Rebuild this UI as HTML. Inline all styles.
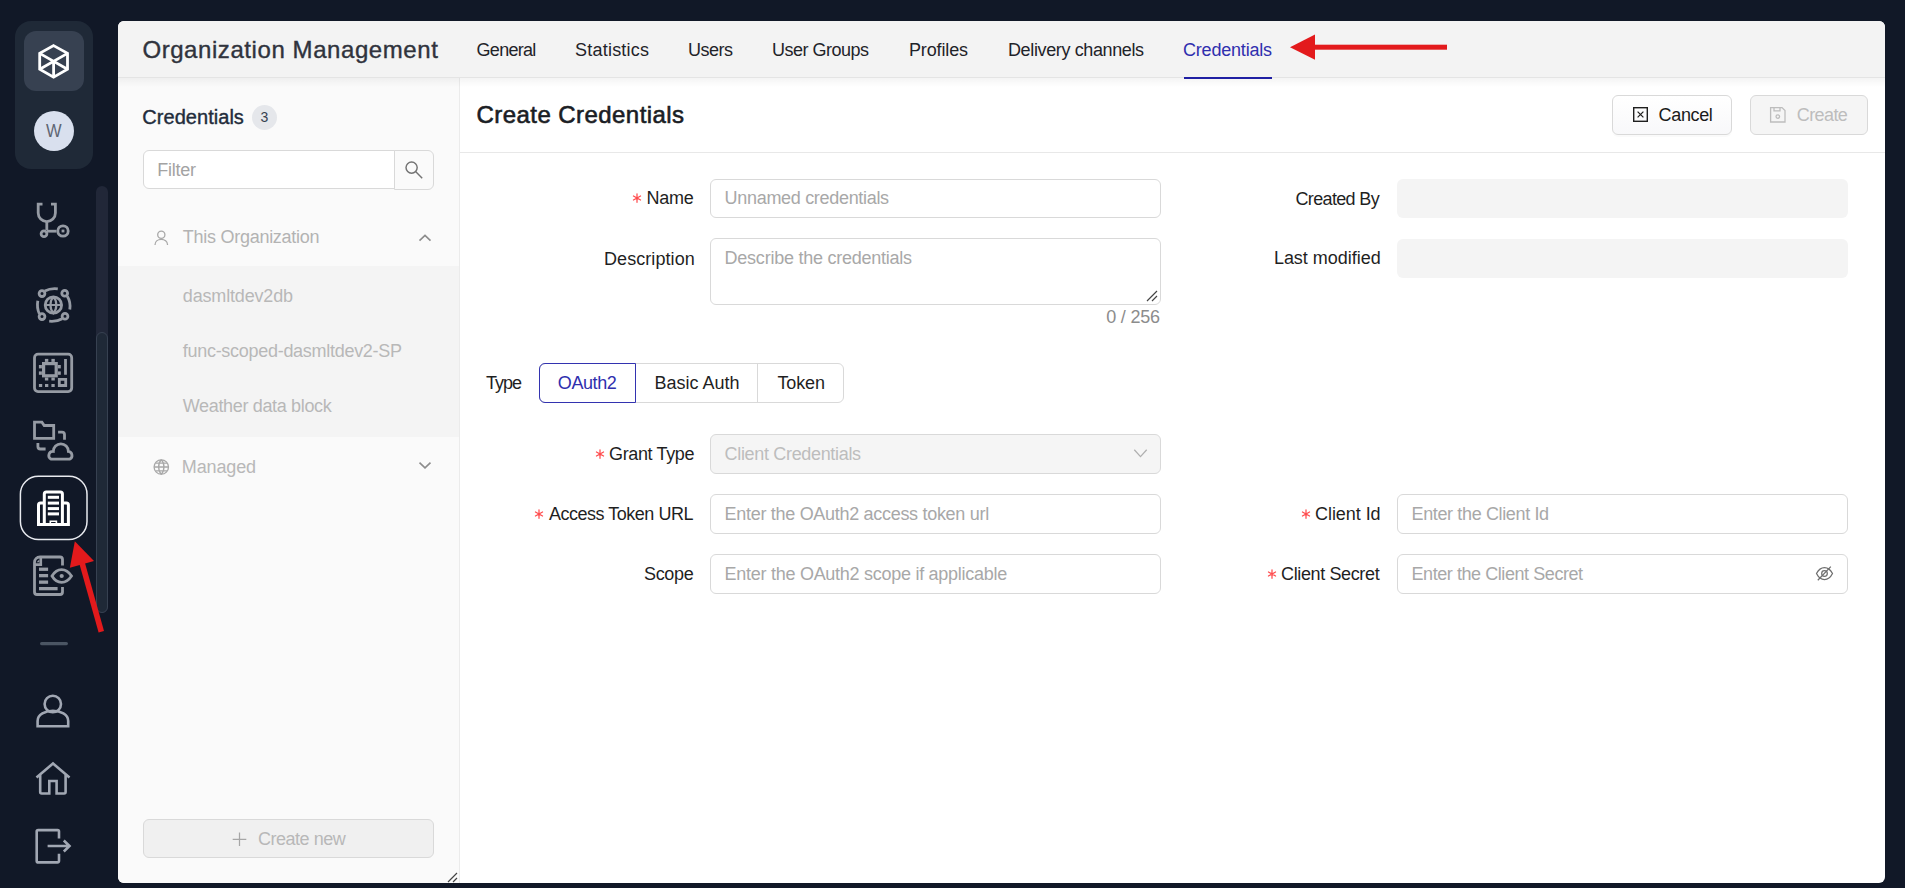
<!DOCTYPE html>
<html><head><meta charset="utf-8">
<style>
html,body{margin:0;padding:0;}
body{width:1905px;height:888px;overflow:hidden;position:relative;background:#111827;font-family:"Liberation Sans",sans-serif;}
.abs{position:absolute;}
.t{position:absolute;white-space:nowrap;line-height:1;}
.box{position:absolute;box-sizing:border-box;}
.inp{position:absolute;box-sizing:border-box;border:1px solid #d9d9d9;border-radius:6px;background:#fff;}
</style></head><body>

<svg class="abs" style="left:0;top:0" width="118" height="888" viewBox="0 0 118 888">
  <rect x="15" y="21" width="78" height="148" rx="16" fill="#1f2937"/>
  <rect x="24" y="31" width="60" height="60" rx="12" fill="#374151"/>
  <g fill="none" stroke="#ffffff" stroke-width="2.8" stroke-linejoin="miter">
    <path d="M53.6 45.6 L67.5 53.4 L67.5 69.3 L53.6 77.2 L39.7 69.3 L39.7 53.4 Z"/>
    <path d="M39.7 53.4 L67.5 69.3 M67.5 53.4 L39.7 69.3 M53.6 61.3 L53.6 77.2"/>
  </g>
  <circle cx="54" cy="131" r="20" fill="#d9e0ee"/>
  <text x="46" y="136.8" font-family="Liberation Sans" font-size="17.7" textLength="15.6" lengthAdjust="spacingAndGlyphs" fill="#5f6673">W</text>
  <rect x="96" y="186" width="12" height="427" rx="6" fill="#212738"/>
  <rect x="96.5" y="332.5" width="11" height="280" rx="5.5" fill="#1f2937" stroke="#374151" stroke-width="1"/>
  <g fill="none" stroke="#969ba4" stroke-width="2.8">
    <!-- stethoscope -->
    <path d="M42.5 204.2 H38.2 V213 A8.6 8.6 0 0 0 55.4 213 V204.2 H51" stroke-linecap="butt"/>
    <path d="M46.8 221.6 V230"/>
    <circle cx="44" cy="233.8" r="2.9"/>
    <path d="M47 231.2 H56.5"/>
    <circle cx="63" cy="231" r="5.2"/>
    <!-- globe orbit -->
    <circle cx="53.4" cy="305" r="8.2"/>
    <path d="M45.2 305 H61.6 M53.4 296.8 C49.5 301 49.5 309 53.4 313.2 C57.3 309 57.3 301 53.4 296.8" stroke-width="2.2"/>
    <circle cx="42" cy="293.6" r="2.9"/>
    <circle cx="64.7" cy="293.3" r="2.9"/>
    <circle cx="42" cy="316.6" r="2.9"/>
    <circle cx="65" cy="316.2" r="2.9"/>
    <path d="M44.8 291 C48.5 289 53 288.2 57.8 288.8"/>
    <path d="M67.3 296.3 C69.5 300 70.5 305 69.8 309.5"/>
    <path d="M62.2 318.8 C58.5 321 54 321.6 49.2 321.2"/>
    <path d="M39.4 314 C37.5 310 37 305.5 37.8 300.8"/>
    <!-- board -->
    <rect x="34.5" y="354.2" width="37.2" height="37.4" rx="3.5"/>
    <rect x="43.6" y="363.6" width="12.6" height="12.2" stroke-width="3.2"/>
    <path d="M65.5 358.9 V374.8 M59.3 379.3 H65.7 V385.5 H59.3 Z" />
  </g>
  <g fill="#969ba4">
    <rect x="61.6" y="229.6" width="2.8" height="2.8"/>
    <rect x="44.9" y="358.9" width="3.4" height="3"/><rect x="51.4" y="358.9" width="3.4" height="3"/>
    <rect x="44.9" y="377.5" width="3.4" height="3"/><rect x="51.4" y="377.5" width="3.4" height="3"/>
    <rect x="38.9" y="365" width="3" height="3.4"/><rect x="38.9" y="371.4" width="3" height="3.4"/>
    <rect x="57.8" y="365" width="3" height="3.4"/><rect x="57.8" y="371.4" width="3" height="3.4"/>
    <rect x="38.9" y="384" width="3.3" height="3"/><rect x="45" y="384" width="3.3" height="3"/><rect x="51.4" y="384" width="3.3" height="3"/>
  </g>
  <g fill="none" stroke="#969ba4" stroke-width="2.8">
    <!-- folder cloud -->
    <path d="M34.5 422.2 H41.9 L44.2 425.5 H53.7 V438.3 H34.5 Z"/>
    <path d="M58.1 432.2 H62 A2.5 2.5 0 0 1 64.5 434.7 V439.8"/>
    <path d="M37.9 443 V446.5 A2.5 2.5 0 0 0 40.4 449 H45.6"/>
    <path d="M51.2 459.2 H69.6 A4.1 4.1 0 0 0 68.4 451.4 A7.5 7.5 0 0 0 53.3 451.4 A4.1 4.1 0 0 0 51.2 459.2 Z"/>
    <!-- doc eye -->
    <path d="M62.5 565.5 V559.5 A2.5 2.5 0 0 0 60 557 H40 C37 557 34.5 559 34.5 562.5 V592 A2.5 2.5 0 0 0 37 594.5 H60 A2.5 2.5 0 0 0 62.5 592 V587"/>
    <path d="M34.5 564.6 H40.8 V557.2" stroke-width="2.6"/>
    <path d="M52 576 C57 567.5 66 567.5 71.5 576 C66 584.5 57 584.5 52 576 Z"/>
  </g>
  <g fill="#969ba4">
    <path d="M36.6 562.2 L39.3 562.2 L39.3 559.4 Z"/>
    <rect x="39" y="567.6" width="9.1" height="3.3"/>
    <rect x="39" y="574" width="9.1" height="3.3"/>
    <rect x="39" y="580.5" width="9.1" height="3.3"/>
    <rect x="39" y="587" width="18.6" height="3.3"/>
    <circle cx="61.7" cy="576" r="2.1"/>
  </g>
  <!-- active building -->
  <rect x="20.4" y="476.2" width="66.6" height="63.4" rx="18" fill="none" stroke="#e8eaef" stroke-width="1.5"/>
  <g fill="none" stroke="#ffffff" stroke-width="3">
    <path d="M44.3 524.5 V494 A2 2 0 0 1 46.3 492 H60.4 A2 2 0 0 1 62.4 494 V524.5"/>
    <path d="M44.3 503 H40.5 A2 2 0 0 0 38.5 505 V524.5 H68.4 V505 A2 2 0 0 0 66.4 503 H62.4"/>
    <path d="M50.3 524.5 V521.2 H56.4 V524.5" stroke-width="1.6"/>
  </g>
  <g fill="#ffffff">
    <rect x="47.8" y="495.8" width="11.2" height="3"/>
    <rect x="47.8" y="501.6" width="11.2" height="3"/>
    <rect x="47.8" y="507.1" width="11.2" height="3"/>
    <rect x="47.8" y="512.4" width="11.2" height="3"/>
  </g>
  <rect x="40" y="642" width="28" height="3.2" rx="1.6" fill="#4b5563"/>
  <g fill="none" stroke="#a1a7b3" stroke-width="2.6">
    <circle cx="52.8" cy="704" r="8.2"/>
    <path d="M37.6 726.2 V721 C37.6 707.5 68.2 707.5 68.2 721 V726.2 Z"/>
    <path d="M36.5 777.5 L53 763.5 L69.5 777.5 M40.2 775 V792 A1.5 1.5 0 0 0 41.7 793.5 H49.3 V781 H56.6 V793.5 H64.1 A1.5 1.5 0 0 0 65.6 792 V775"/>
    <path d="M59 838.5 V831.6 A1.5 1.5 0 0 0 57.5 830.1 H38.2 A1.5 1.5 0 0 0 36.7 831.6 V860.9 A1.5 1.5 0 0 0 38.2 862.4 H57.5 A1.5 1.5 0 0 0 59 860.9 V853.7"/>
    <path d="M47.6 846 H69.5 M63.8 840.5 L69.5 846 L63.8 851.5"/>
  </g>
</svg>
<div class="abs" style="left:118px;top:21px;width:1767px;height:862px;border-radius:6px;overflow:hidden;background:#fff;">
  <div class="abs" style="left:0;top:0;width:1767px;height:56px;background:#f3f3f3;border-bottom:1px solid #e4e4e4;"></div>
  <div class="abs" style="left:0;top:57px;width:341px;height:805px;background:#fafafa;border-right:1px solid #ebebeb;"></div>
  <div class="abs" style="left:0;top:57px;width:1767px;height:9px;background:linear-gradient(rgba(0,0,0,0.045),rgba(0,0,0,0));"></div>
  <div class="abs" style="left:0;top:245px;width:341px;height:171px;background:#f4f4f4;"></div>
  <div class="abs" style="left:342px;top:131px;width:1425px;height:1px;background:#e8e8e8;"></div>
  <div class="abs" style="left:1066px;top:56px;width:88px;height:2px;background:#1f1fa3;"></div>
</div>
<!-- left panel widgets -->
<div class="box" style="left:252px;top:105px;width:25px;height:25px;border-radius:50%;background:#e5e7eb;"></div>
<div class="inp" style="left:143px;top:150px;width:252px;height:39px;border-radius:6px 0 0 6px;"></div>
<div class="box" style="left:394px;top:150px;width:40px;height:40px;border:1px solid #d9d9d9;border-radius:0 6px 6px 0;background:#fafafa;"></div>
<svg class="abs" style="left:380px;top:140px" width="60" height="60"><g fill="none" stroke="#737373" stroke-width="1.45"><circle cx="31.6" cy="27.6" r="5.6"/><path d="M35.6 31.6 L42.2 38.2"/></g></svg>
<svg class="abs" style="left:140px;top:220px" width="300" height="270"><g fill="none" stroke="#a8a8a8" stroke-width="1.3">
  <circle cx="21.3" cy="14.8" r="3.6"/><path d="M15 25 C15 17.5 27.6 17.5 27.6 25"/>

  <circle cx="21.3" cy="247" r="7.2"/><path d="M14.1 247 H28.5 M21.3 239.8 C17.8 243 17.8 251 21.3 254.2 C24.8 251 24.8 243 21.3 239.8 M15.5 243.2 H27.1 M15.5 250.8 H27.1"/>
</g><g fill="none" stroke="#8c8c8c" stroke-width="1.6">
  <path d="M279.5 20.6 L285 15.4 L290.5 20.6"/>
  <path d="M279.5 242.6 L285 247.8 L290.5 242.6"/>
</g></svg>
<div class="box" style="left:143px;top:819px;width:291px;height:39px;border:1px solid #d9d9d9;border-radius:6px;background:#f0f0f0;"></div>
<svg class="abs" style="left:228px;top:828px" width="24" height="24"><path d="M11.5 4.5 V18 M4.7 11.3 H18.3" stroke="#a6a6a6" stroke-width="1.25" fill="none"/></svg>
<svg class="abs" style="left:440px;top:865px" width="20" height="20"><path d="M8 17 L17 8 M13 17 L17 13" stroke="#444" stroke-width="1.2" fill="none"/></svg>
<!-- main buttons -->
<div class="box" style="left:1612px;top:95px;width:120px;height:40px;border:1px solid #d9d9d9;border-radius:6px;background:linear-gradient(#ffffff,#f8f8fa);box-shadow:0 2px 0 rgba(0,0,0,0.02);"></div>
<svg class="abs" style="left:1630px;top:104px" width="22" height="22"><rect x="3.7" y="3.7" width="13.6" height="13.6" fill="none" stroke="#1f1f1f" stroke-width="1.4"/><path d="M7.6 7.6 L13.4 13.4 M13.4 7.6 L7.6 13.4" stroke="#1f1f1f" stroke-width="1.2"/></svg>
<div class="box" style="left:1750px;top:95px;width:118px;height:40px;border:1px solid #d9d9d9;border-radius:6px;background:#f5f5f5;"></div>
<svg class="abs" style="left:1767px;top:104px" width="22" height="22"><g fill="none" stroke="#bdbdbd" stroke-width="1.3"><path d="M3.6 3.6 H15 L18 6.6 V18 H3.6 Z"/><path d="M7 3.6 V6.8 H13 V3.6"/><circle cx="10.8" cy="12.6" r="1.8"/></g></svg>
<!-- form -->
<div class="inp" style="left:710px;top:179px;width:451px;height:39px;"></div>
<div class="inp" style="left:710px;top:238px;width:451px;height:67px;"></div>
<svg class="abs" style="left:1144px;top:288px" width="16" height="16"><path d="M3 13 L13 3 M8 13 L13 8" stroke="#444" stroke-width="1.2" fill="none"/></svg>
<div class="box" style="left:1397px;top:179px;width:451px;height:39px;border-radius:6px;background:#f4f4f4;"></div>
<div class="box" style="left:1397px;top:239px;width:451px;height:39px;border-radius:6px;background:#f4f4f4;"></div>
<div class="box" style="left:539px;top:363px;width:305px;height:40px;border:1px solid #d9d9d9;border-radius:6px;background:#fff;"></div>
<div class="box" style="left:757px;top:363px;width:1px;height:40px;background:#d9d9d9;"></div>
<div class="box" style="left:539px;top:363px;width:97px;height:40px;border:1px solid #3333b0;border-radius:6px 0 0 6px;"></div>
<div class="inp" style="left:710px;top:434px;width:451px;height:40px;background:#f5f5f5;"></div>
<svg class="abs" style="left:1130px;top:444px" width="20" height="20"><path d="M4.3 5.8 L10.5 12.6 L16.7 5.8" stroke="#b0b0b0" stroke-width="1.3" fill="none"/></svg>
<div class="inp" style="left:710px;top:494px;width:451px;height:40px;"></div>
<div class="inp" style="left:710px;top:554px;width:451px;height:40px;"></div>
<div class="inp" style="left:1397px;top:494px;width:451px;height:40px;"></div>
<div class="inp" style="left:1397px;top:554px;width:451px;height:40px;"></div>
<svg class="abs" style="left:1810px;top:560px" width="30" height="28"><g fill="none" stroke="#6e6e6e" stroke-width="1.25"><path d="M6.5 13.5 C10.5 5.5 18.5 5.5 22.5 13.5 C18.5 21.5 10.5 21.5 6.5 13.5 Z"/><circle cx="14.5" cy="13.5" r="2.8"/><path d="M7.8 20.2 L20.8 6.6"/></g></svg>
<!-- asterisks -->
<svg class="abs" style="left:631.3px;top:192.4px" width="12" height="12"><path d="M6 1.75 V10.25 M2.45 3.95 L9.55 8.05 M9.55 3.95 L2.45 8.05" stroke="#ff4d4f" stroke-width="1.25" stroke-linecap="round"/></svg>
<svg class="abs" style="left:594.2px;top:447.9px" width="12" height="12"><path d="M6 1.75 V10.25 M2.45 3.95 L9.55 8.05 M9.55 3.95 L2.45 8.05" stroke="#ff4d4f" stroke-width="1.25" stroke-linecap="round"/></svg>
<svg class="abs" style="left:533.4px;top:508px" width="12" height="12"><path d="M6 1.75 V10.25 M2.45 3.95 L9.55 8.05 M9.55 3.95 L2.45 8.05" stroke="#ff4d4f" stroke-width="1.25" stroke-linecap="round"/></svg>
<svg class="abs" style="left:1300.3px;top:508px" width="12" height="12"><path d="M6 1.75 V10.25 M2.45 3.95 L9.55 8.05 M9.55 3.95 L2.45 8.05" stroke="#ff4d4f" stroke-width="1.25" stroke-linecap="round"/></svg>
<svg class="abs" style="left:1265.9px;top:568px" width="12" height="12"><path d="M6 1.75 V10.25 M2.45 3.95 L9.55 8.05 M9.55 3.95 L2.45 8.05" stroke="#ff4d4f" stroke-width="1.25" stroke-linecap="round"/></svg>
<div class="t" id="t0" style="left:142.40px;top:37.68px;font-size:24px;color:#30333d;letter-spacing:0.573px;-webkit-text-stroke:0.38px #30333d;">Organization Management</div>
<div class="t" id="t1" style="left:476.60px;top:40.56px;font-size:18px;color:#1f2329;letter-spacing:-0.733px;">General</div>
<div class="t" id="t2" style="left:575.00px;top:40.56px;font-size:18px;color:#1f2329;letter-spacing:0.222px;">Statistics</div>
<div class="t" id="t3" style="left:688.00px;top:40.56px;font-size:18px;color:#1f2329;letter-spacing:-0.500px;">Users</div>
<div class="t" id="t4" style="left:772.00px;top:40.56px;font-size:18px;color:#1f2329;letter-spacing:-0.500px;">User Groups</div>
<div class="t" id="t5" style="left:909.00px;top:40.56px;font-size:18px;color:#1f2329;letter-spacing:-0.143px;">Profiles</div>
<div class="t" id="t6" style="left:1008.00px;top:40.56px;font-size:18px;color:#1f2329;letter-spacing:-0.375px;">Delivery channels</div>
<div class="t" id="t7" style="left:1183.00px;top:40.56px;font-size:18px;color:#2f2fae;letter-spacing:-0.200px;">Credentials</div>
<div class="t" id="t8" style="left:142.30px;top:107.07px;font-size:20px;color:#222c3b;letter-spacing:0.040px;-webkit-text-stroke:0.38px #222c3b;">Credentials</div>
<div class="t" id="t9" style="left:260.50px;top:110.15px;font-size:14px;color:#374151;letter-spacing:0.000px;">3</div>
<div class="t" id="t10" style="left:157.20px;top:160.76px;font-size:18px;color:#a3a3a3;letter-spacing:-0.240px;">Filter</div>
<div class="t" id="t11" style="left:182.80px;top:228.46px;font-size:18px;color:#b3b3b3;letter-spacing:-0.269px;">This Organization</div>
<div class="t" id="t12" style="left:182.80px;top:287.46px;font-size:18px;color:#b8b8b8;letter-spacing:-0.164px;">dasmltdev2db</div>
<div class="t" id="t13" style="left:182.80px;top:342.46px;font-size:18px;color:#b8b8b8;letter-spacing:-0.288px;">func-scoped-dasmltdev2-SP</div>
<div class="t" id="t14" style="left:182.80px;top:397.36px;font-size:18px;color:#b8b8b8;letter-spacing:-0.341px;">Weather data block</div>
<div class="t" id="t15" style="left:181.80px;top:457.76px;font-size:18px;color:#b8b8b8;letter-spacing:-0.133px;">Managed</div>
<div class="t" id="t16" style="left:257.90px;top:829.76px;font-size:18px;color:#b8b8b8;letter-spacing:-0.467px;">Create new</div>
<div class="t" id="t17" style="left:476.50px;top:102.68px;font-size:24px;color:#1a1d24;letter-spacing:0.441px;-webkit-text-stroke:0.6px #1a1d24;">Create Credentials</div>
<div class="t" id="t18" style="left:1658.60px;top:105.76px;font-size:18px;color:#1a1a1a;letter-spacing:-0.360px;">Cancel</div>
<div class="t" id="t19" style="left:1796.80px;top:105.76px;font-size:18px;color:#bdbdbd;letter-spacing:-0.600px;">Create</div>
<div class="t" id="t20" style="left:646.60px;top:189.46px;font-size:18px;color:#1f1f1f;letter-spacing:-0.300px;">Name</div>
<div class="t" id="t21" style="left:604.00px;top:249.76px;font-size:18px;color:#1f1f1f;letter-spacing:0.070px;">Description</div>
<div class="t" id="t22" style="left:486.00px;top:373.76px;font-size:18px;color:#1f1f1f;letter-spacing:-1.000px;">Type</div>
<div class="t" id="t23" style="left:609.00px;top:444.76px;font-size:18px;color:#1f1f1f;letter-spacing:-0.367px;">Grant Type</div>
<div class="t" id="t24" style="left:549.00px;top:504.76px;font-size:18px;color:#1f1f1f;letter-spacing:-0.487px;">Access Token URL</div>
<div class="t" id="t25" style="left:644.00px;top:564.76px;font-size:18px;color:#1f1f1f;letter-spacing:-0.325px;">Scope</div>
<div class="t" id="t26" style="left:1295.50px;top:189.66px;font-size:18px;color:#1f1f1f;letter-spacing:-0.656px;">Created By</div>
<div class="t" id="t27" style="left:1273.90px;top:249.36px;font-size:18px;color:#1f1f1f;letter-spacing:-0.025px;">Last modified</div>
<div class="t" id="t28" style="left:1315.00px;top:504.76px;font-size:18px;color:#1f1f1f;letter-spacing:-0.050px;">Client Id</div>
<div class="t" id="t29" style="left:1281.00px;top:564.76px;font-size:18px;color:#1f1f1f;letter-spacing:-0.367px;">Client Secret</div>
<div class="t" id="t30" style="left:724.60px;top:189.46px;font-size:18px;color:#a8a8a8;letter-spacing:-0.311px;">Unnamed credentials</div>
<div class="t" id="t31" style="left:724.60px;top:248.76px;font-size:18px;color:#a8a8a8;letter-spacing:-0.243px;">Describe the credentials</div>
<div class="t" id="t32" style="left:724.60px;top:444.76px;font-size:18px;color:#bdbdbd;letter-spacing:-0.329px;">Client Credentials</div>
<div class="t" id="t33" style="left:724.60px;top:504.76px;font-size:18px;color:#a8a8a8;letter-spacing:-0.300px;">Enter the OAuth2 access token url</div>
<div class="t" id="t34" style="left:724.60px;top:564.76px;font-size:18px;color:#a8a8a8;letter-spacing:-0.274px;">Enter the OAuth2 scope if applicable</div>
<div class="t" id="t35" style="left:1411.50px;top:504.76px;font-size:18px;color:#a8a8a8;letter-spacing:-0.361px;">Enter the Client Id</div>
<div class="t" id="t36" style="left:1411.50px;top:564.76px;font-size:18px;color:#a8a8a8;letter-spacing:-0.432px;">Enter the Client Secret</div>
<div class="t" id="t37" style="left:1106.30px;top:308.36px;font-size:18px;color:#8c8c8c;letter-spacing:-0.217px;">0 / 256</div>
<div class="t" id="t38" style="left:557.80px;top:373.76px;font-size:18px;color:#2f2fae;letter-spacing:-0.420px;">OAuth2</div>
<div class="t" id="t39" style="left:654.60px;top:373.76px;font-size:18px;color:#1f1f1f;letter-spacing:-0.011px;">Basic Auth</div>
<div class="t" id="t40" style="left:777.40px;top:373.76px;font-size:18px;color:#1f1f1f;letter-spacing:-0.125px;">Token</div>
<!-- red annotation arrows -->
<svg class="abs" style="left:0;top:0" width="1905" height="888"><g fill="#e31a1c" stroke="none">
  <path d="M1290 47.2 L1315 34.5 L1315 59.8 Z"/><rect x="1314" y="44.7" width="133" height="5"/>
  <path d="M74.8 541.2 L94 561 L69.9 567.8 Z"/>
  <path d="M79.3 563.5 L84.7 562.1 L104 631 L98.6 632.4 Z"/>
</g></svg>
</body></html>
